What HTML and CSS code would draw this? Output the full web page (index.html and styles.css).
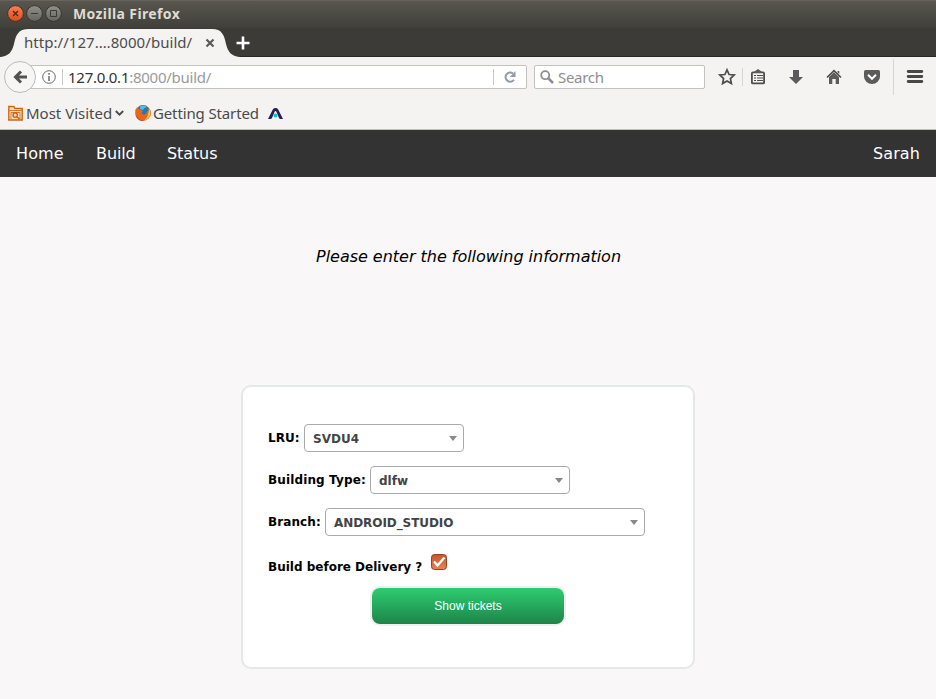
FILE: index.html
```html
<!DOCTYPE html>
<html lang="en">
<head>
<meta charset="utf-8">
<title>Build</title>
<link rel="stylesheet" href="styles.css">
</head>
<body>
<header class="titlebar">
  <svg class="window-buttons" width="58" height="20" viewBox="0 0 58 20">
    <defs>
      <linearGradient id="close" x2="0" y2="1"><stop stop-color="#f58158"/><stop offset="1" stop-color="#de4b1c"/></linearGradient>
      <linearGradient id="grey" x2="0" y2="1"><stop stop-color="#91908a"/><stop offset="1" stop-color="#66645d"/></linearGradient>
    </defs>
    <g stroke="#35342f">
      <circle cx="11.500" cy="9.500" r="7.900" fill="url(#close)"/>
      <circle cx="30.500" cy="9.500" r="7.900" fill="url(#grey)"/>
      <circle cx="49.500" cy="9.500" r="7.900" fill="url(#grey)"/>
    </g>
    <path d="M9 7l5 5M14 7l-5 5" stroke="#56240f" stroke-width="1.300"/>
    <path d="M27 9.500h7M46.500 6.500h6v6h-6z" fill="none" stroke="#3b3a36"/>
  </svg>
  <span class="window-title">Mozilla Firefox</span>
</header>
<div class="tabstrip">
  <div class="tab">
    <svg class="tab-shape" width="244" height="29" viewBox="0 0 244 29"><path d="M0 29C9 28 12 24 14 16C16 7 18 1 29 1H212C222 1 224 7 226 16C228 24 231 28 240 29z" fill="#f4f3f1"/></svg>
    <span class="tab-title">http://127.…8000/build/</span>
    <svg class="tab-close" width="10" height="10" viewBox="0 0 10 10"><path d="M1.500 1.500l7 7M8.500 1.500l-7 7" stroke="#5c5b59" stroke-width="2.200"/></svg>
  </div>
  <svg class="new-tab" width="14" height="14" viewBox="0 0 14 14"><path d="M7 .5v13M.5 7h13" stroke="#fff" stroke-width="2.600"/></svg>
</div>
<div class="toolbar">
  <div class="back"><svg width="16" height="16" viewBox="0 0 16 16"><path d="M9 2.500L3.500 8 9 13.500M4 8h11" fill="none" stroke="#525251" stroke-width="3"/></svg></div>
  <div class="urlbar">
    <svg class="info" width="14" height="14" viewBox="0 0 14 14"><circle cx="7" cy="7" r="6.300" fill="none" stroke="#6a6a6a"/><path d="M7 6v5M7 3v1.700" stroke="#6a6a6a" stroke-width="1.500"/></svg>
    <i class="divider"></i>
    <span class="url"><b>127.0.0.1</b>:8000/build/</span>
    <i class="divider reload-divider"></i>
    <svg class="reload" width="12" height="12" viewBox="0 0 12 12"><path d="M10 8.700A4.600 4.600 0 1 1 9 2.500" fill="none" stroke="#919ca6" stroke-width="2"/><path d="M11.500 0v6H5.800z" fill="#919ca6"/></svg>
  </div>
  <div class="search">
    <svg width="14" height="14" viewBox="0 0 14 14"><circle cx="5.200" cy="5.200" r="4" fill="none" stroke="#8e8e8e" stroke-width="1.800"/><path d="M8 8l5 5" stroke="#8e8e8e" stroke-width="2.500"/></svg>
    <span>Search</span>
  </div>
  <svg class="actions" width="231" height="40" viewBox="0 0 231 40">
    <g fill="none" stroke="#4d4d4d">
      <path d="M22 12.800l2.100 4.700 5.100.5-3.800 3.500 1 5.100-4.400-2.600-4.400 2.600 1-5.100-3.800-3.500 5.100-.5z" stroke-width="1.700"/>
      <rect x="46.900" y="15.400" width="12.200" height="11" rx="1" stroke-width="1.800"/>
      <path d="M49 18.500h2M52 18.500h6M49 21h2M52 21h6M49 23.500h2M52 23.500h6" stroke-width="1.200"/>
      <path d="M122 20.500l7-6.800 7 6.800" stroke-width="1.700"/>
    </g>
    <g fill="#5b5b5b">
      <path d="M49.500 16v-1.500L53 12l3.500 2.500V16z"/>
      <path d="M88 13h6v7h4l-7 7-7-7h4z"/>
      <path d="M124 20l5-4.700 5 4.700v7h-3.300v-5h-3.400v5H124zM132.500 14h1.800v3l-1.800-1.500z"/>
      <path d="M160.500 13h13q1.500 0 1.500 1.500v5a8 7.500 0 0 1-16 0v-5q0-1.500 1.500-1.500z"/>
    </g>
    <path d="M163 17.800l4 4 4-4" fill="none" stroke="#fff" stroke-width="2"/>
    <path d="M37.500 11v18M188.500 2v36" stroke="#d8d6d3"/>
    <path d="M203.200 14.500h13.600M203.200 19.500h13.600M203.200 24.500h13.600" stroke="#484848" stroke-width="2.900" stroke-linecap="round"/>
  </svg>
</div>
<div class="bookmarks">
  <svg class="folder" width="15" height="16" viewBox="0 0 15 16"><path d="M.8 15V1.500h5l1 2h7.400V15z" fill="#f7dfc7" stroke="#cd6516" stroke-width="1.400"/><path d="M1 5.500h13M3 15V7.500h9V15" fill="none" stroke="#d67a32"/><circle cx="7.200" cy="10" r="2.200" fill="none" stroke="#ca5b0a" stroke-width="1.300"/><path d="M9 12l2.500 2" stroke="#ca5b0a" stroke-width="1.400"/></svg>
  <span class="most">Most Visited</span>
  <svg class="chevron" width="9" height="6" viewBox="0 0 9 6"><path d="M.8 1l3.700 3.700L8.200 1" fill="none" stroke="#4c4c4c" stroke-width="1.800"/></svg>
  <svg class="firefox" width="16" height="16" viewBox="0 0 16 16"><circle cx="8" cy="8" r="7.900" fill="#e8671b"/><path d="M3 2.500Q8-2 13 2.500Q15 5 13.500 8L9 10 4 6z" fill="#2278bd"/><path d="M5 1.500Q9-.8 12 2Q9 2.500 8 5L5 4z" fill="#55b9e6"/><path d="M.3 5L2 2.500l1 1.200L6.500 5 8 6.700 5.500 8.200Q7 10.500 10 9.500Q12.500 8 12 5L13.500 7V3Q17 7 15 11.500L9 14 2 12z" fill="#e8671b"/><path d="M14 3.500q3 5 0 9-2 2-4.500 2.500Q13.500 12 14 3.500z" fill="#f8c23f"/><path d="M.3 8.500Q2 15 9 15.800Q2 17 .3 8.500z" fill="#b6302d"/></svg>
  <span class="getting">Getting Started</span>
  <svg class="site" width="15" height="13" viewBox="0 0 15 13"><path d="M0 12L4.800 2.500Q5.500 1 7 1H8Q9.500 1 10.200 2.500L15 12H12.500Q11.500 12 11 11L8.300 4.500Q7.500 3.300 6.700 4.500L4 11Q3.500 12 2.500 12z" fill="#291d58"/><circle cx="7.500" cy="8.500" r="2" fill="#1cb8d2"/></svg>
</div>
<nav class="site-nav">
  <a class="home">Home</a><a class="build">Build</a><a class="status">Status</a><a class="user">Sarah</a>
</nav>
<main>
  <p class="intro">Please enter the following information</p>
  <form class="card">
    <div class="row"><label class="lru-label">LRU:</label><div class="select lru">SVDU4</div></div>
    <div class="row"><label class="type-label">Building Type:</label><div class="select type">dlfw</div></div>
    <div class="row"><label class="branch-label">Branch:</label><div class="select branch">ANDROID_STUDIO</div></div>
    <div class="row check-row"><label>Build before Delivery ?</label>
      <svg class="checkbox" width="16" height="16" viewBox="0 0 16 16"><defs><linearGradient id="check" x2="0" y2="1"><stop stop-color="#cb5527"/><stop offset="1" stop-color="#e68258"/></linearGradient></defs><rect x=".5" y=".5" width="15" height="15" rx="3" fill="url(#check)" stroke="#99401f"/><path d="M3 7.500l3.500 4L13.500 3.500" fill="none" stroke="#fff" stroke-width="2.300"/></svg>
    </div>
    <button type="button">Show tickets</button>
  </form>
</main>
</body>
</html>
```
FILE: styles.css
```css
* { box-sizing: border-box; }
body { margin: 0; width: 936px; height: 699px; overflow: hidden; display: flex; flex-direction: column; background: #f9f7f8; font-family: "DejaVu Sans", sans-serif; }
svg { display: block; flex: none; }
span, label, a { white-space: nowrap; }
.titlebar, .tabstrip, .toolbar, .bookmarks { display: flex; align-items: center; flex: none; font-family: "Noto Sans", sans-serif; font-size: 15px; }
.titlebar { height: 28px; padding: 0 0 2px 4px; background: linear-gradient(#58564e, #403f3a); border-top: 1px solid #66645b; }
.window-buttons { margin-top: 1px; }
.window-title { width: 110px; margin-left: 11px; color: #dfdbd2; font-size: 14px; font-weight: 700; letter-spacing: .38px; }
.tabstrip { height: 29px; background: #3c3b37; border-bottom: 1px solid #292825; }
.tab { position: relative; display: flex; align-items: center; width: 236px; height: 29px; padding-left: 24px; color: #4c4c4c; }
.tab-shape { position: absolute; left: 0; top: 0; }
.tab-title { position: relative; width: 181px; letter-spacing: .05px; }
.tab-close { position: relative; margin-top: 1px; }
.new-tab { margin-top: 2px; }
.toolbar { height: 41px; padding-bottom: 1px; background: #f4f3f1; }
.back { z-index: 1; display: flex; align-items: center; justify-content: center; width: 32px; height: 32px; margin-left: 4px; border: 1px solid #bdbbb8; border-radius: 50%; background: #f7f6f5; }
.urlbar, .search { display: flex; align-items: center; height: 24px; margin-bottom: 1px; border: 1px solid #c4c2bf; border-radius: 2px; background: #fff; }
.urlbar { width: 507px; margin-left: -16px; padding-left: 21px; }
.divider { width: 1px; height: 16px; margin: 0 5px 0 6px; background: #c8c8c8; }
.url { width: 425px; color: #9a9a9a; letter-spacing: -.26px; }
.url b { font-weight: 400; color: #333; }
.reload-divider { margin: 0 10px 0 0; }
.search { width: 171px; margin-left: 7px; padding-left: 5px; gap: 4px; color: #8e8e8e; letter-spacing: -.3px; }
.bookmarks { height: 32px; padding: 0 0 1px 8px; background: #f4f3f1; border-bottom: 1px solid #bfbfbb; color: #4a4a4a; }
.most { width: 86px; margin-left: 3px; }
.chevron { margin-left: 3px; }
.firefox { margin-left: 11px; }
.getting { width: 106px; margin-left: 2px; letter-spacing: -.13px; }
.site { margin-left: 9px; }
.site-nav { display: flex; flex: none; height: 47px; padding: 0 16px; align-items: center; gap: 32px; background: #333; color: #fff; font-size: 16px; }
.home { width: 48px; letter-spacing: .1px; }
.build { width: 39px; letter-spacing: -.1px; }
.status { width: 50px; letter-spacing: -.1px; }
.user { width: 47px; margin-left: auto; letter-spacing: .1px; }
main { display: flex; flex-direction: column; align-items: center; padding-top: 70px; }
.intro { margin: 0 0 118px; padding-left: 1px; font-size: 16px; font-style: italic; line-height: 20px; letter-spacing: -.02px; }
.card { display: flex; flex-direction: column; width: 454px; height: 284px; padding: 37px 25px 0; border: 2px solid #e4e8e7; border-radius: 10px; background: #fff; font-size: 12px; font-weight: 700; }
.row { display: flex; align-items: center; height: 28px; margin-bottom: 14px; }
.lru-label { width: 36px; }
.type-label { width: 102px; letter-spacing: .13px; }
.branch-label { width: 57px; letter-spacing: .1px; }
.select { display: flex; align-items: center; justify-content: space-between; height: 28px; padding: 1px 6px 0 8px; border: 1px solid #aaa; border-radius: 4px; color: #444; }
.select::after { content: ""; border: 4px solid transparent; border-top: 5px solid #888; border-bottom: 0; }
.lru { width: 160px; }
.type { width: 200px; }
.branch { width: 320px; letter-spacing: -.07px; }
.check-row { height: 24px; margin: 0 0 14px; align-items: flex-start; }
.check-row label { margin: 10px 9px 0 0; }
.checkbox { margin-top: 4px; }
button { align-self: center; width: 192px; height: 36px; padding: 0; border: 0; border-radius: 8px; background: linear-gradient(#2ecc71, #1e8449); box-shadow: 0 0 0 2px #f0f0f0; color: #fff; font: 12px "Liberation Sans", sans-serif; }
```
